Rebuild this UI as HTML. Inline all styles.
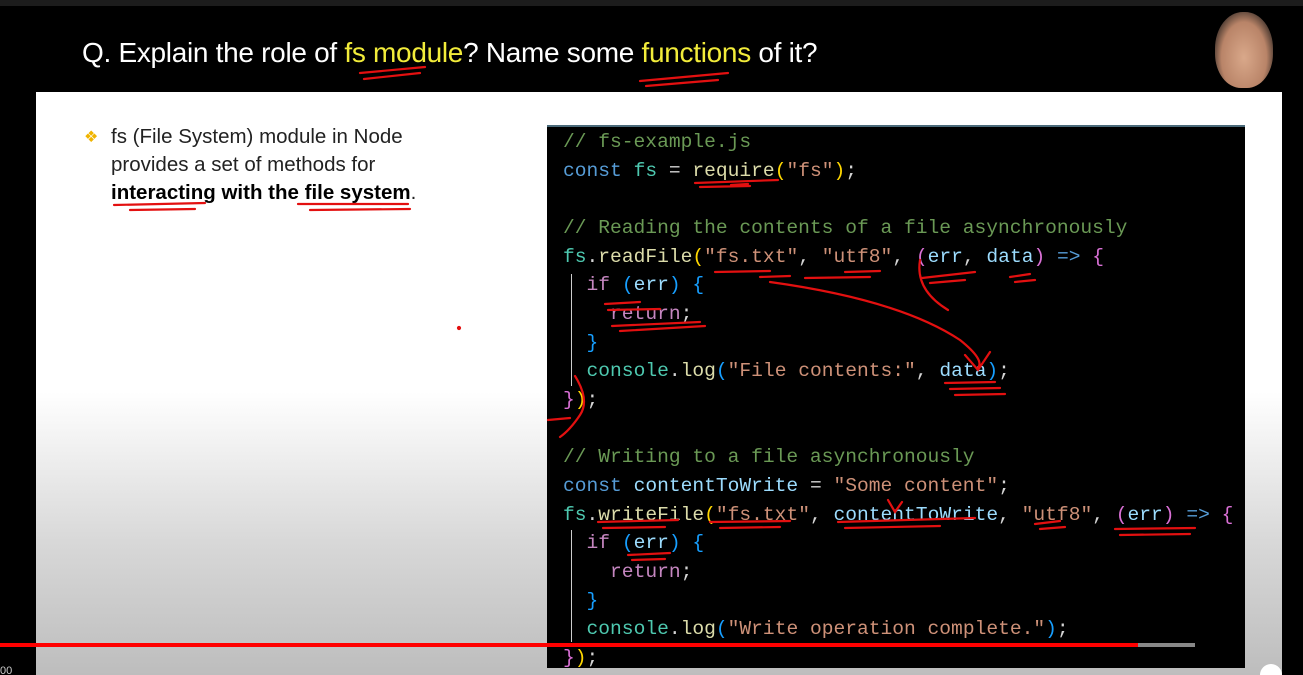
<!DOCTYPE html>
<html><head><meta charset="utf-8"><style>
*{margin:0;padding:0;box-sizing:border-box}
html,body{width:1303px;height:675px;overflow:hidden;background:#000}
body{position:relative;font-family:"Liberation Sans",sans-serif}
.top{position:absolute;left:0;top:0;width:1303px;height:6px;background:#1c1c1c}
.title{position:absolute;left:82px;top:37px;color:#fff;font-size:28px;letter-spacing:-0.3px}
.y{color:#f2ec3a}
.slide{position:absolute;left:36px;top:92px;width:1246px;height:583px;background:linear-gradient(#fff 0,#fff 300px,#d8d8d8 450px,#bdbdbd 583px)}
.bul{position:absolute;left:111px;top:123px;font-size:20.5px;line-height:28px;color:#222}
.dia{position:absolute;left:84px;top:127px;color:#f0b400;font-size:16px}
.code{position:absolute;left:547px;top:125px;width:698px;height:543px;background:#000;border-top:2px solid #4a6a7a}
pre{position:absolute;left:563px;top:128px;font-family:"Liberation Mono",monospace;font-size:19.6px;line-height:28.67px;color:#d4d4d4}
.c{color:#6a9955}.k{color:#569cd6}.t{color:#4ec9b0}.f{color:#dcdcaa}.s{color:#ce9178}.g{color:#ffd700}.p{color:#da70d6}.v{color:#9cdcfe}.m{color:#c586c0}.b{color:#179fff}
.guide{position:absolute;left:571px;width:1px;background:#ccc}
.bar{position:absolute;left:0;top:643px;width:1138px;height:4px;background:#f00}
.bar2{position:absolute;left:1138px;top:643px;width:57px;height:4px;background:#888}
svg{position:absolute;left:0;top:0}
</style></head><body>
<div class="top"></div>
<div class="title">Q. Explain the role of <span class="y">fs module</span>? Name some <span class="y">functions</span> of it?</div>
<div style="position:absolute;left:1215px;top:12px;width:58px;height:76px;border-radius:48% 48% 45% 45%;background:radial-gradient(ellipse at 50% 60%,#d9a88a 0,#b98468 55%,#3a2e28 80%)"></div>
<div class="slide"></div>
<div class="dia">❖</div>
<div class="bul">fs (File System) module in Node<br>provides a set of methods for<br><b style="color:#000">interacting with the file system</b>.</div>
<div class="code"></div>
<div class="guide" style="top:274px;height:112px"></div>
<div class="guide" style="top:530px;height:112px"></div>
<pre><span class="c">// fs-example.js</span>
<span class="k">const</span> <span class="t">fs</span> = <span class="f">require</span><span class="g">(</span><span class="s">"fs"</span><span class="g">)</span>;

<span class="c">// Reading the contents of a file asynchronously</span>
<span class="t">fs</span>.<span class="f">readFile</span><span class="g">(</span><span class="s">"fs.txt"</span>, <span class="s">"utf8"</span>, <span class="p">(</span><span class="v">err</span>, <span class="v">data</span><span class="p">)</span> <span class="k">=&gt;</span> <span class="p">{</span>
  <span class="m">if</span> <span class="b">(</span><span class="v">err</span><span class="b">)</span> <span class="b">{</span>
    <span class="m">return</span>;
  <span class="b">}</span>
  <span class="t">console</span>.<span class="f">log</span><span class="b">(</span><span class="s">"File contents:"</span>, <span class="v">data</span><span class="b">)</span>;
<span class="p">}</span><span class="g">)</span>;

<span class="c">// Writing to a file asynchronously</span>
<span class="k">const</span> <span class="v">contentToWrite</span> = <span class="s">"Some content"</span>;
<span class="t">fs</span>.<span class="f">writeFile</span><span class="g">(</span><span class="s">"fs.txt"</span>, <span class="v">contentToWrite</span>, <span class="s">"utf8"</span>, <span class="p">(</span><span class="v">err</span><span class="p">)</span> <span class="k">=&gt;</span> <span class="p">{</span>
  <span class="m">if</span> <span class="b">(</span><span class="v">err</span><span class="b">)</span> <span class="b">{</span>
    <span class="m">return</span>;
  <span class="b">}</span>
  <span class="t">console</span>.<span class="f">log</span><span class="b">(</span><span class="s">"Write operation complete."</span><span class="b">)</span>;
<span class="p">}</span><span class="g">)</span>;</pre>
<svg width="1303" height="675" fill="none" stroke="#e31010" stroke-width="2.2" stroke-linecap="round">
<path d="M360 73 L425 67 M364 79 L420 73"/>
<path d="M640 81 L728 73 M646 86 L718 80"/>
<path d="M114 205 L205 203 M130 210 L195 209 M298 204 L408 204 M310 210 L410 209"/>
<path d="M695 183 L778 180 M700 187 L750 186 M731 185 L748 184"/>
<path d="M715 272 L770 271 M760 277 L790 276 M805 278 L870 277 M845 272 L880 271"/>
<path d="M920 260 Q915 290 948 310 M922 278 L975 272 M930 283 L965 280 M1010 277 L1030 274 M1015 282 L1035 280"/>
<path d="M770 282 Q900 300 960 340 Q985 360 978 368 M965 355 L978 370 L990 352"/>
<path d="M605 304 L640 302 M608 310 L660 309"/>
<path d="M612 326 L700 322 M620 331 L705 326"/>
<path d="M945 383 L995 382 M950 389 L1000 388 M955 395 L1005 394"/>
<path d="M575 376 Q590 400 580 415 Q570 430 560 437 M548 420 L570 418"/>
<path d="M598 522 L678 520 M603 528 L665 527"/>
<path d="M710 522 L790 521 M720 528 L780 527"/>
<path d="M838 522 L975 518 M845 528 L940 526 M888 500 L895 512 L902 502"/>
<path d="M1035 524 L1060 521 M1040 529 L1065 527 M1115 529 L1195 528 M1120 535 L1190 534"/>
<path d="M628 555 L670 553 M632 560 L665 559"/>
<circle cx="459" cy="328" r="1" fill="#e31010"/>
</svg>
<div class="bar"></div><div class="bar2"></div>
<div style="position:absolute;left:1260px;top:664px;width:22px;height:22px;border-radius:50%;background:#fff"></div>
<div style="position:absolute;left:0;top:665px;color:#ccc;font-size:11px">00</div>
</body></html>
